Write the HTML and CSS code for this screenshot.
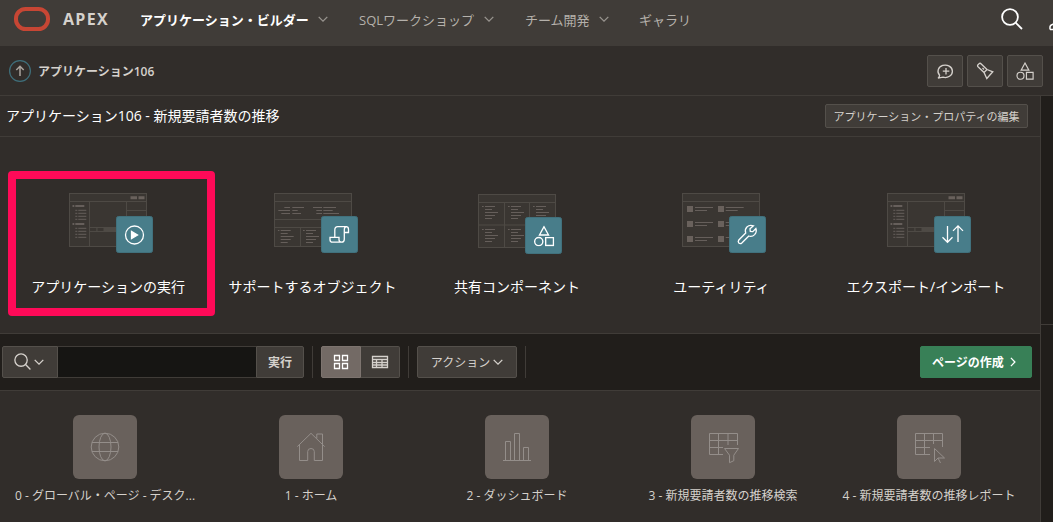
FILE: index.html
```html
<!DOCTYPE html>
<html lang="ja">

<head>
  <meta charset="UTF-8">
  <title>アプリケーション106</title>
  <link rel="stylesheet" href="styles.css">
</head>

<body>

  <!-- shared shapes -->
  <svg class="defs" width="0" height="0">
    <symbol id="chevron" viewBox="0 0 10 6">
      <path d="M.7.9 5 5.1 9.3.9" />
    </symbol>
    <symbol id="search" viewBox="0 0 22 22">
      <circle cx="9" cy="9" r="7.9" />
      <path d="M14.8 14.8 21 21" />
    </symbol>
    <symbol id="shapes" viewBox="0 0 20 20">
      <path d="M10 1.2 14.3 9H5.7zM11.6 11.6h7.4v7.4h-7.4z" />
      <circle cx="5" cy="15.3" r="3.9" />
    </symbol>
    <symbol id="lines" viewBox="0 0 20 16">
      <path d="M0 1h1.7M3 1h10M3 4h7M3 7h13M3 10h10M3 13h7" />
    </symbol>
    <symbol id="tree" viewBox="0 0 18 18">
      <path class="thick" d="M0 2h2M3 2h9" />
      <path d="M3 6.3h2M6 6.3h8M3 9.3h2M6 9.3h8M3 12.3h2M6 12.3h8M3 15.3h2M6 15.3h8" />
    </symbol>
    <symbol id="frame" viewBox="0 0 78 54">
      <rect x=".5" y=".5" width="77" height="53" />
      <path d="M0 8.5h78" />
    </symbol>
    <symbol id="designer" viewBox="0 0 78 54">
      <use href="#frame" />
      <path class="edge" d="M20.5 8.5V54M57.5 8.5V34M57.5 17.5H78" />
      <path class="panel" d="M21 34h57v5H21z" />
      <path class="slot" d="M21 35h6.300v3H21zM28.500 35h6v3h-6z" />
      <path class="blk" d="M61.500 3.300h6.500v3h-6.500zM69.500 3.300h6v3h-6z" />
      <use href="#tree" class="bars" x="3.300" y="11" width="18" height="18" />
      <use href="#tree" class="bars" x="3.300" y="29" width="18" height="18" />
    </symbol>
  </svg>

  <header class="topbar">
    <svg class="logo" width="36" height="24"><rect x="2" y="2" width="32" height="20" rx="9.500" /></svg>
    <span class="brand">APEX</span>
    <nav class="nav">
      <a class="nav-item builder current"><span>アプリケーション・ビルダー</span><svg class="chev"><use href="#chevron" /></svg></a>
      <a class="nav-item sql"><span>SQLワークショップ</span><svg class="chev"><use href="#chevron" /></svg></a>
      <a class="nav-item team"><span>チーム開発</span><svg class="chev"><use href="#chevron" /></svg></a>
      <a class="nav-item gallery"><span>ギャラリ</span></a>
    </nav>
    <svg class="icon top-search" width="22" height="22"><use href="#search" /></svg>
    <svg class="icon top-user" width="20" height="20"><path d="M1 16.500v-2.500q0-2 2.500-2.600L7.500 9.500M1 16.500h18" /></svg>
  </header>

  <div class="crumbs">
    <svg class="up" width="22" height="22">
      <circle cx="11" cy="11" r="10.400" />
      <path d="M11 16V6.500M7.300 10 11 6.300 14.700 10" />
    </svg>
    <span class="crumb">アプリケーション106</span>
    <div class="tools">
      <button class="btn"><svg class="icon" width="18" height="18"><path d="M3.600 13.200A7.200 6.200 0 1 1 7 15.200L2 16.200Q3.600 15 3.600 13.200zM10 6v6.500M6.800 9.200h6.500" /></svg></button>
      <button class="btn"><svg class="icon" width="18" height="18"><path d="M1.600 3.200 3.500 1.300Q4.500 1 5 1.800L11 7.500 16.800 9.800 10.800 16.500 8 10.500 1.700 4.500zM11 7.500 8 10.500M6.500 6l1.500 1.500" /></svg></button>
      <button class="btn"><svg class="icon" width="18" height="18"><use href="#shapes" /></svg></button>
    </div>
  </div>

  <div class="body">
    <main class="main">
      <div class="title-row">
        <h1>アプリケーション106 - 新規要請者数の推移</h1>
        <button class="btn edit">アプリケーション・プロパティの編集</button>
      </div>

      <ul class="cards">
        <li class="card">
          <svg class="art" width="84" height="60">
            <use href="#designer" class="wire" width="78" height="54" />
            <rect class="badge" x="47.500" y="23.500" width="36" height="36" rx="2" />
            <g class="glyph">
              <circle cx="65.500" cy="42" r="9" />
              <path class="solid" d="M62.500 38.500v7l6-3.500z" />
            </g>
          </svg>
          <span class="label">アプリケーションの実行</span>
        </li>
        <li class="card">
          <svg class="art" width="84" height="60">
            <g class="wire">
              <use href="#frame" width="78" height="54" />
              <path class="edge" d="M0 26.500h78M0 34.500h78M26.500 34.500V54" />
              <path class="bars" d="M10.300 14.500H16M18.300 14.500H30M4.300 17.500H16M18.300 17.500h5.400M7.300 20.500H16M18.300 20.500H27M39 14.500h9M49.300 14.500H62M42.300 17.500H48M49.300 17.500h9.400M42.300 20.500H48M49.300 20.500H65" />
              <use href="#lines" class="bars" x="3.700" y="36.500" width="20" height="16" />
              <use href="#lines" class="bars" x="29" y="36.500" width="20" height="16" />
            </g>
            <rect class="badge" x="47.500" y="23.500" width="36" height="36" rx="2" />
            <g class="glyph">
              <path d="M60.800 44.500V37q0-3.300 3-3.300H72q2.500 0 2.500 2.500v3.300h-4M72.500 33.700q-2.200.3-2.200 3v9.500q0 3-2.800 3H58.500q-2.500 0-2.500-2.500v-2.400h9v2.500q0 2.400 2.500 2.400" />
            </g>
          </svg>
          <span class="label">サポートするオブジェクト</span>
        </li>
        <li class="card lower">
          <svg class="art" width="84" height="60">
            <g class="wire">
              <use href="#frame" width="78" height="54" />
              <path class="edge" d="M26.500 8.500V54M51.500 8.500V54M0 31h78" />
              <use href="#lines" class="bars" x="4" y="11.500" width="20" height="16" />
              <use href="#lines" class="bars" x="30" y="11.500" width="20" height="16" />
              <use href="#lines" class="bars" x="55" y="11.500" width="20" height="16" />
              <use href="#lines" class="bars" x="4" y="34.500" width="20" height="16" />
              <use href="#lines" class="bars" x="30" y="34.500" width="20" height="16" />
            </g>
            <rect class="badge" x="47.500" y="23.500" width="36" height="36" rx="2" />
            <use href="#shapes" class="glyph" x="55.500" y="31.500" width="21" height="21" />
          </svg>
          <span class="label">共有コンポーネント</span>
        </li>
        <li class="card">
          <svg class="art" width="84" height="60">
            <g class="wire">
              <use href="#frame" width="78" height="54" />
              <path class="blk" d="M5 13h6v6H5zM5 28h6v6H5zM5 43h6v6H5zM36 13h6v6h-6zM36 28h6v6h-6zM36 43h6v6h-6z" />
              <path class="bars" d="M13 14.500h18M13 17.500h12M13 29.500h18M13 32.500h12M13 44.500h18M13 47.500h12M43.700 14.500h18M43.700 17.500h12M43.700 29.500h18M43.700 32.500h12M43.700 44.500h18" />
            </g>
            <rect class="badge" x="47.500" y="23.500" width="36" height="36" rx="2" />
            <g class="glyph">
              <path d="M71.500 32.800q-4-1.400-6.600 1.200-2.400 2.500-1.200 6L56.800 47q-1.200 1.600 0 3 1.600 1.300 3 0l7-7q3.400 1 5.800-1.400 2.500-2.700 1.300-6.100L70.800 38.600 68.300 38.300 68 35.800z" />
            </g>
          </svg>
          <span class="label">ユーティリティ</span>
        </li>
        <li class="card">
          <svg class="art" width="84" height="60">
            <use href="#designer" class="wire" width="78" height="54" />
            <rect class="badge" x="47.500" y="23.500" width="36" height="36" rx="2" />
            <g class="glyph">
              <path d="M60.500 33v16M55.500 44.300l5 5 5-5M71 49V33M66 37.900l5-5 5 5" />
            </g>
          </svg>
          <span class="label">エクスポート/インポート</span>
        </li>
      </ul>
      <div class="highlight"></div>

      <div class="toolbar">
        <div class="search-group">
          <button class="btn pick"><svg class="icon" width="18" height="18" viewBox="0 0 23 23"><use href="#search" width="22" height="22" /></svg><svg class="chev"><use href="#chevron" /></svg></button>
          <input type="text" class="query">
          <button class="btn go">実行</button>
        </div>
        <i class="sep"></i>
        <div class="views">
          <button class="btn on"><svg class="icon" width="16" height="16"><path d="M1.500 1.500h5v5h-5zM9.500 1.500h5v5h-5zM1.500 9.500h5v5h-5zM9.500 9.500h5v5h-5z" /></svg></button>
          <button class="btn"><svg class="icon" width="18" height="14"><path d="M1.500 1.500h15v11h-15zM1.500 4.500h15M1.500 7.500h15M1.500 10h15M5.500 4v8.500M11 4v8.500" /></svg></button>
        </div>
        <i class="sep"></i>
        <button class="btn actions"><span>アクション</span><svg class="chev"><use href="#chevron" /></svg></button>
        <i class="sep"></i>
        <button class="btn create"><span>ページの作成</span><svg class="icon" width="6" height="10"><path d="M.9.900 4.900 5 .9 9.100" /></svg></button>
      </div>

      <ul class="pages">
        <li>
          <div class="tile"><svg width="30" height="30"><circle cx="15" cy="15" r="13.800" /><ellipse cx="15" cy="15" rx="6" ry="13.800" /><path d="M2 10.500h26M2 19.500h26" /></svg></div>
          <span>0 - グローバル・ページ - デスク...</span>
        </li>
        <li>
          <div class="tile"><svg width="30" height="30"><path d="M1.300 14.600 15 1.300 28.700 14.600M3.500 12.500v16h8.200v-9q0-3 3.300-3t3.300 3v9h8.200v-16M20.800 6.500V2h5.700v10" /></svg></div>
          <span>1 - ホーム</span>
        </li>
        <li>
          <div class="tile"><svg width="30" height="30"><path d="M1 28.500h28M3.500 28.500v-19h5v19M12.500 28.500v-27h5v27M21.500 28.500v-13h5v13" /></svg></div>
          <span>2 - ダッシュボード</span>
        </li>
        <li>
          <div class="tile"><svg width="34" height="34"><path d="M17 24.500H3.500v-21h28V15M3.500 10.500h28M3.500 17.500H17M12.500 3.500v21M22 3.500V15M18.500 18.500h14l-4.700 6.700v5.500l-4.300 2v-7.500z" /></svg></div>
          <span>3 - 新規要請者数の推移検索</span>
        </li>
        <li>
          <div class="tile"><svg width="34" height="34"><path d="M18 24.500H3.500v-21h27v13.500M3.500 10.500h27M3.500 17.500H18M12.500 3.500v21M21.500 3.500V14M22.500 18.500v13l3.500-3.500h6.500zM26 28l2.500 5" /></svg></div>
          <span>4 - 新規要請者数の推移レポート</span>
        </li>
      </ul>
    </main>
    <aside class="side"></aside>
  </div>

</body>

</html>
```
FILE: styles.css
```css
* {
  box-sizing: border-box;
}

body {
  margin: 0;
  height: 522px;
  overflow: hidden;
  display: flex;
  flex-direction: column;
  background-color: #312d2a;
  color: #d5d1cc;
  font-family: "Open Sans", "Noto Sans CJK JP", sans-serif;
  font-size: 12px;
  white-space: nowrap;
}

svg {
  fill: none;
  stroke: currentColor;
  flex: none;
}

.defs {
  position: absolute;
}

.icon {
  stroke-width: 1.3;
}

.chev {
  width: 10px;
  height: 6px;
  stroke-width: 1.3;
}

.btn {
  display: flex;
  align-items: center;
  justify-content: center;
  padding: 0;
  border: 1px solid #54504b;
  border-radius: 2px;
  background-color: #403c38;
  color: #d5d1cc;
  font: inherit;
}

/* top bar */
.topbar {
  display: flex;
  align-items: center;
  height: 46px;
  padding: 0 0 8px 14px;
  flex: none;
  background-color: #403c38;
}

.logo {
  color: #c74634;
  stroke-width: 4;
}

.brand {
  width: 77px;
  padding-left: 13px;
  font-size: 16px;
  font-weight: 700;
  letter-spacing: 1.3px;
}

.nav {
  display: flex;
  margin-left: 13px;
  flex: 1;
}

.nav-item {
  display: flex;
  align-items: center;
  justify-content: space-between;
  font-size: 13px;
  color: #b5b1ab;
}

.nav-item .chev {
  color: #98948f;
}

.current {
  color: #fff;
  font-weight: 600;
}

.builder {
  width: 188px;
}

.sql {
  width: 135px;
  margin-left: 31px;
}

.team {
  width: 84px;
  margin-left: 31px;
}

.gallery {
  margin-left: 30px;
}

.top-search {
  color: #fff;
  stroke-width: 1.8;
  margin-right: 26px;
}

.top-user {
  color: #fff;
  stroke-width: 1.5;
  margin: 8px -16px 0 0;
}

/* breadcrumb */
.crumbs {
  display: flex;
  align-items: center;
  height: 50px;
  padding: 0 10px 0 9px;
  flex: none;
  border-bottom: 1px solid #403c38;
}

.up circle {
  stroke: #3f6f7b;
  stroke-width: 1.2;
}

.up path {
  stroke: #aaa49e;
  stroke-width: 1.5;
}

.crumb {
  margin-left: 7px;
  font-weight: 600;
}

.tools {
  display: flex;
  gap: 4px;
  margin-left: auto;
}

.tools .btn {
  width: 36px;
  height: 32px;
}

/* content */
.body {
  display: flex;
  flex: 1;
}

.main {
  width: 1040px;
  position: relative;
}

.title-row {
  display: flex;
  align-items: center;
  justify-content: space-between;
  height: 41px;
  padding: 0 12px 0 6px;
  border-bottom: 1px solid #403c38;
}

h1 {
  margin: 0;
  padding-bottom: 2px;
  font-size: 14px;
  font-weight: 400;
  color: #fff;
}

.edit {
  width: 203px;
  height: 24px;
  font-size: 11px;
}

.cards {
  display: grid;
  grid-template-columns: repeat(5, 1fr);
  height: 197px;
  margin: 0;
  padding: 56px 12px 0 6px;
  border-bottom: 1px solid #403c38;
  list-style: none;
}

.card {
  display: flex;
  flex-direction: column;
  align-items: center;
}

.art {
  margin-left: 6px;
}

.lower .art {
  margin: 1px 0 -1px 6px;
}

.label {
  margin-top: 24px;
  font-size: 14px;
  line-height: 20px;
  color: #fff;
}

.wire {
  fill: #3a3632;
  stroke: #4e4a45;
}

.bars {
  stroke: #665f5b;
}

.thick {
  stroke-width: 1.8;
}

.panel {
  fill: #4e4a45;
  stroke: none;
}

.slot {
  fill: #3a3632;
  stroke: none;
}

.blk {
  fill: #69615c;
  stroke: none;
}

.badge {
  fill: #487d8a;
  stroke: #41717d;
}

.glyph {
  stroke: #fff;
  stroke-width: 1.3;
}

.solid {
  fill: #fff;
}

.highlight {
  position: absolute;
  left: 8px;
  top: 75px;
  width: 207px;
  height: 145px;
  border: 8px solid #ff0a58;
  border-radius: 4px;
}

/* toolbar */
.toolbar {
  display: flex;
  align-items: center;
  height: 57px;
  padding: 0 8px 1px 2px;
  border-bottom: 1px solid #403c38;
  background-color: #211e1b;
}

.toolbar .btn {
  height: 32px;
}

.search-group {
  display: flex;
  width: 302px;
}

.pick {
  width: 56px;
  gap: 2px;
  padding-right: 3px;
  border-radius: 2px 0 0 2px;
}

.pick .icon {
  stroke-width: 1.7;
}

.query {
  flex: 1;
  min-width: 0;
  border: solid #403c38;
  border-width: 1px 0;
  background-color: #161513;
}

.go {
  width: 48px;
  font-weight: 600;
  border-radius: 0 2px 2px 0;
}

.sep {
  width: 1px;
  height: 32px;
  margin: 0 8px;
  background-color: #403c38;
}

.views {
  display: flex;
}

.views .btn {
  width: 39px;
  border-left: 0;
  border-radius: 0 2px 2px 0;
}

.views .on {
  width: 40px;
  border: 1px solid #7d746f;
  border-radius: 2px 0 0 2px;
  background-color: #736a65;
  color: #fff;
}

.actions {
  width: 100px;
  gap: 3px;
}

.create {
  width: 112px;
  margin-left: auto;
  gap: 6px;
  padding-right: 4px;
  border-color: #388057;
  background-color: #388057;
  color: #fff;
  font-weight: 700;
}

/* page icons */
.pages {
  display: grid;
  grid-template-columns: repeat(5, 206px);
  margin: 0;
  padding: 24px 0 0 2px;
  list-style: none;
}

.pages li {
  display: flex;
  flex-direction: column;
  align-items: center;
  gap: 8px;
  line-height: 18px;
}

.tile {
  display: flex;
  align-items: center;
  justify-content: center;
  width: 64px;
  height: 64px;
  border-radius: 6px;
  background-color: #69615c;
  color: #948e8a;
}

.side {
  flex: 1;
  border-left: 1px solid #403c38;
  background: linear-gradient(#403c38, #403c38) 0 228px / 100% 1px no-repeat #211e1b;
}
```
